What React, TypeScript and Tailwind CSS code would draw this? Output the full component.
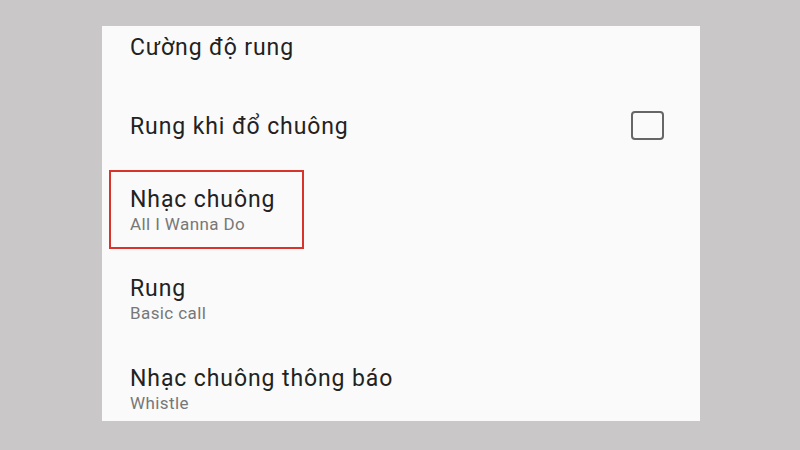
import React from 'react';

type Row = { title: string; summary?: string; checkbox?: boolean; highlight?: boolean };

const rows: Row[] = [
  { title: 'Cường độ rung' },
  { title: 'Rung khi đổ chuông', checkbox: true },
  { title: 'Nhạc chuông', summary: 'All I Wanna Do', highlight: true },
  { title: 'Rung', summary: 'Basic call' },
  { title: 'Nhạc chuông thông báo', summary: 'Whistle' },
];

const Text = ({ title, summary }: { title: string; summary?: string }) => (
  <div className="flex flex-col">
    <span className="text-[23px] leading-[28px] tracking-[0.9px] text-[#222222]">{title}</span>
    {summary && (
      <span className="text-[17px] leading-[20px] tracking-[0.4px] text-[#777777]">{summary}</span>
    )}
  </div>
);

export default function App() {
  return (
    <div
      className="w-[800px] h-[450px] bg-[#c9c7c8] pt-[26px] pl-[102px] overflow-hidden"
      style={{ fontFamily: 'Roboto, "Noto Sans", sans-serif' }}
    >
      <div className="w-[598px] h-[395px] bg-[#fafafa] overflow-hidden flex flex-col">
        {/* partially scrolled-off first row */}
        <div className="h-[61px] shrink-0 pt-[8px] pl-[28px]">
          <Text title={rows[0].title} />
        </div>

        <div className="h-[76px] shrink-0 flex items-center pt-[4px] pl-[28px] pr-[36px]">
          <div className="flex-1">
            <Text title={rows[1].title} />
          </div>
          <div className="w-[33px] h-[29px] -mt-[4px] rounded-[4px] border-[2.5px] border-[#666666]" />
        </div>

        <div className="h-[90px] shrink-0 pt-[7px] pl-[7px]">
          <div className="w-[195px] h-[79px] border-2 border-[#d9342c] pl-[19px] pt-[14px]">
            <Text title={rows[2].title} summary={rows[2].summary} />
          </div>
        </div>

        {rows.slice(3).map((r) => (
          <div key={r.title} className="h-[90px] shrink-0 flex items-center pt-[2px] pl-[28px] pr-[36px]">
            <Text title={r.title} summary={r.summary} />
          </div>
        ))}
      </div>
    </div>
  );
}
